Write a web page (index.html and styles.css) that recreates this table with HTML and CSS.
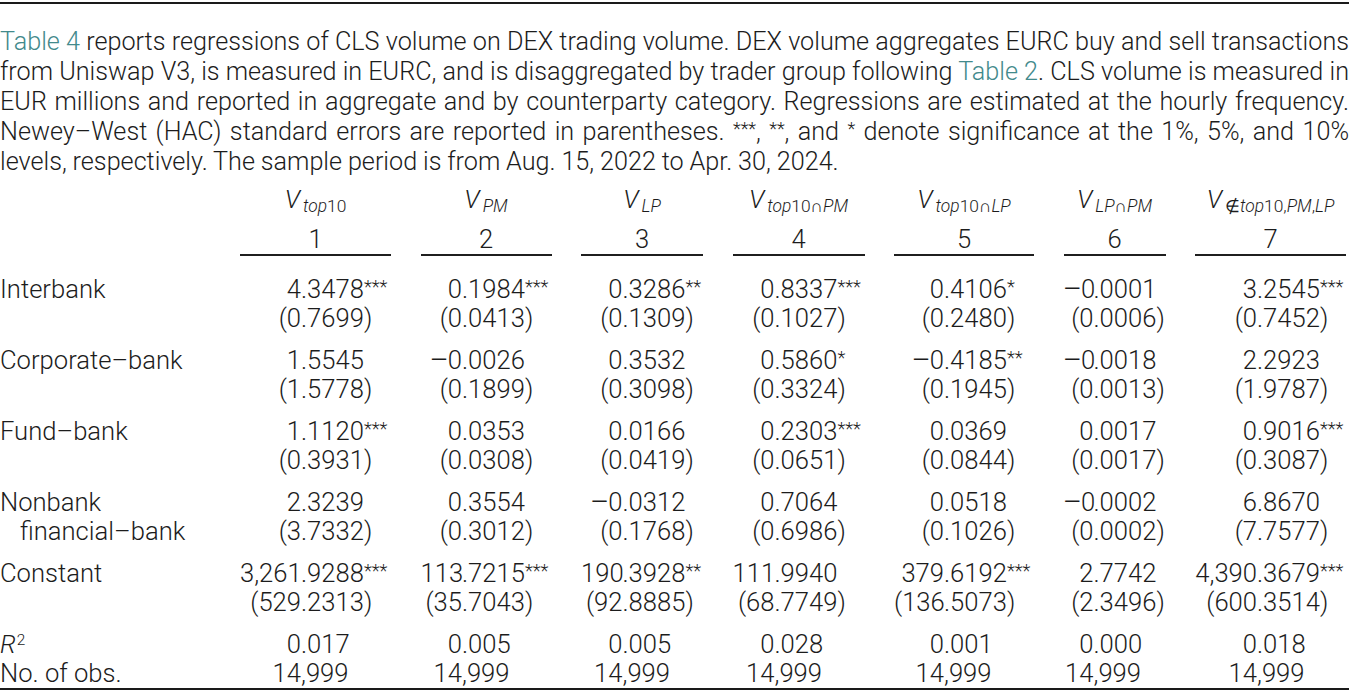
FILE: index.html
```html
<!DOCTYPE html>
<html lang="en">
<head>
<meta charset="utf-8">
<title>Table 4</title>
<link rel="stylesheet" href="styles.css">
</head>
<body>
<div class="top-rule"></div>
<p class="intro">
  <span class="ln"><span class="xref">Table 4</span> reports regressions of CLS volume on DEX trading volume. DEX volume aggregates EURC buy and sell transactions</span>
  <span class="ln">from Uniswap V3, is measured in EURC, and is disaggregated by trader group following <span class="xref">Table 2</span>. CLS volume is measured in</span>
  <span class="ln">EUR millions and reported in aggregate and by counterparty category. Regressions are estimated at the hourly frequency.</span>
  <span class="ln">Newey–West (HAC) standard errors are reported in parentheses. <span class="ast">***</span>, <span class="ast">**</span>, and <span class="ast">*</span> denote significance at the 1%, 5%, and 10%</span>
  <span class="ln last">levels, respectively. The sample period is from Aug. 15, 2022 to Apr. 30, 2024.</span>
</p>

<div class="reg">
  <div class="row">
    <div class="lab"></div>
    <div class="h"><i>V</i><span class="sub"><i>top</i>10</span></div>
    <div class="h"><i>V</i><span class="sub"><i>PM</i></span></div>
    <div class="h"><i>V</i><span class="sub"><i>LP</i></span></div>
    <div class="h"><i>V</i><span class="sub"><i>top</i>10∩<i>PM</i></span></div>
    <div class="h"><i>V</i><span class="sub"><i>top</i>10∩<i>LP</i></span></div>
    <div class="h"><i>V</i><span class="sub"><i>LP</i>∩<i>PM</i></span></div>
    <div class="h"><i>V</i><span class="sub">∉<i>top</i>10,<i>PM</i>,<i>LP</i></span></div>
  </div>
  <div class="row">
    <div class="lab"></div>
    <div class="n"><div class="nr">1</div></div>
    <div class="n"><div class="nr">2</div></div>
    <div class="n"><div class="nr">3</div></div>
    <div class="n"><div class="nr">4</div></div>
    <div class="n"><div class="nr">5</div></div>
    <div class="n"><div class="nr">6</div></div>
    <div class="n"><div class="nr">7</div></div>
  </div>

  <div class="row first">
    <div class="lab">Interbank</div>
    <div class="i">4</div><div class="f">.3478<sup class="st">***</sup></div>
    <div class="i">0</div><div class="f">.1984<sup class="st">***</sup></div>
    <div class="i">0</div><div class="f">.3286<sup class="st">**</sup></div>
    <div class="i">0</div><div class="f">.8337<sup class="st">***</sup></div>
    <div class="i">0</div><div class="f">.4106<sup class="st">*</sup></div>
    <div class="i"><span class="mi">−</span>0</div><div class="f">.0001</div>
    <div class="i">3</div><div class="f">.2545<sup class="st">***</sup></div>
  </div>
  <div class="row">
    <div class="lab"></div>
    <div class="i">(0</div><div class="f">.7699)</div>
    <div class="i">(0</div><div class="f">.0413)</div>
    <div class="i">(0</div><div class="f">.1309)</div>
    <div class="i">(0</div><div class="f">.1027)</div>
    <div class="i">(0</div><div class="f">.2480)</div>
    <div class="i">(0</div><div class="f">.0006)</div>
    <div class="i">(0</div><div class="f">.7452)</div>
  </div>

  <div class="row g">
    <div class="lab">Corporate–bank</div>
    <div class="i">1</div><div class="f">.5545</div>
    <div class="i"><span class="mi">−</span>0</div><div class="f">.0026</div>
    <div class="i">0</div><div class="f">.3532</div>
    <div class="i">0</div><div class="f">.5860<sup class="st">*</sup></div>
    <div class="i"><span class="mi">−</span>0</div><div class="f">.4185<sup class="st">**</sup></div>
    <div class="i"><span class="mi">−</span>0</div><div class="f">.0018</div>
    <div class="i">2</div><div class="f">.2923</div>
  </div>
  <div class="row">
    <div class="lab"></div>
    <div class="i">(1</div><div class="f">.5778)</div>
    <div class="i">(0</div><div class="f">.1899)</div>
    <div class="i">(0</div><div class="f">.3098)</div>
    <div class="i">(0</div><div class="f">.3324)</div>
    <div class="i">(0</div><div class="f">.1945)</div>
    <div class="i">(0</div><div class="f">.0013)</div>
    <div class="i">(1</div><div class="f">.9787)</div>
  </div>

  <div class="row g">
    <div class="lab">Fund–bank</div>
    <div class="i">1</div><div class="f">.1120<sup class="st">***</sup></div>
    <div class="i">0</div><div class="f">.0353</div>
    <div class="i">0</div><div class="f">.0166</div>
    <div class="i">0</div><div class="f">.2303<sup class="st">***</sup></div>
    <div class="i">0</div><div class="f">.0369</div>
    <div class="i">0</div><div class="f">.0017</div>
    <div class="i">0</div><div class="f">.9016<sup class="st">***</sup></div>
  </div>
  <div class="row">
    <div class="lab"></div>
    <div class="i">(0</div><div class="f">.3931)</div>
    <div class="i">(0</div><div class="f">.0308)</div>
    <div class="i">(0</div><div class="f">.0419)</div>
    <div class="i">(0</div><div class="f">.0651)</div>
    <div class="i">(0</div><div class="f">.0844)</div>
    <div class="i">(0</div><div class="f">.0017)</div>
    <div class="i">(0</div><div class="f">.3087)</div>
  </div>

  <div class="row g">
    <div class="lab">Nonbank</div>
    <div class="i">2</div><div class="f">.3239</div>
    <div class="i">0</div><div class="f">.3554</div>
    <div class="i"><span class="mi">−</span>0</div><div class="f">.0312</div>
    <div class="i">0</div><div class="f">.7064</div>
    <div class="i">0</div><div class="f">.0518</div>
    <div class="i"><span class="mi">−</span>0</div><div class="f">.0002</div>
    <div class="i">6</div><div class="f">.8670</div>
  </div>
  <div class="row">
    <div class="lab indent">financial–bank</div>
    <div class="i">(3</div><div class="f">.7332)</div>
    <div class="i">(0</div><div class="f">.3012)</div>
    <div class="i">(0</div><div class="f">.1768)</div>
    <div class="i">(0</div><div class="f">.6986)</div>
    <div class="i">(0</div><div class="f">.1026)</div>
    <div class="i">(0</div><div class="f">.0002)</div>
    <div class="i">(7</div><div class="f">.7577)</div>
  </div>

  <div class="row g">
    <div class="lab">Constant</div>
    <div class="i">3,261</div><div class="f">.9288<sup class="st">***</sup></div>
    <div class="i">113</div><div class="f">.7215<sup class="st">***</sup></div>
    <div class="i">190</div><div class="f">.3928<sup class="st">**</sup></div>
    <div class="i">111</div><div class="f">.9940</div>
    <div class="i">379</div><div class="f">.6192<sup class="st">***</sup></div>
    <div class="i">2</div><div class="f">.7742</div>
    <div class="i">4,390</div><div class="f">.3679<sup class="st">***</sup></div>
  </div>
  <div class="row">
    <div class="lab"></div>
    <div class="i">(529</div><div class="f">.2313)</div>
    <div class="i">(35</div><div class="f">.7043)</div>
    <div class="i">(92</div><div class="f">.8885)</div>
    <div class="i">(68</div><div class="f">.7749)</div>
    <div class="i">(136</div><div class="f">.5073)</div>
    <div class="i">(2</div><div class="f">.3496)</div>
    <div class="i">(600</div><div class="f">.3514)</div>
  </div>

  <div class="row g">
    <div class="lab"><i>R</i><sup class="sq">2</sup></div>
    <div class="i">0</div><div class="f">.017</div>
    <div class="i">0</div><div class="f">.005</div>
    <div class="i">0</div><div class="f">.005</div>
    <div class="i">0</div><div class="f">.028</div>
    <div class="i">0</div><div class="f">.001</div>
    <div class="i">0</div><div class="f">.000</div>
    <div class="i">0</div><div class="f">.018</div>
  </div>
  <div class="row">
    <div class="lab">No. of obs.</div>
    <div class="i">14</div><div class="f">,999</div>
    <div class="i">14</div><div class="f">,999</div>
    <div class="i">14</div><div class="f">,999</div>
    <div class="i">14</div><div class="f">,999</div>
    <div class="i">14</div><div class="f">,999</div>
    <div class="i">14</div><div class="f">,999</div>
    <div class="i">14</div><div class="f">,999</div>
  </div>
</div>
<div class="bottom-rule"></div>
</body>
</html>
```
FILE: styles.css
```css
html, body {
  margin: 0;
  padding: 0;
  background: #ffffff;
}

body {
  font-family: Roboto, "DejaVu Sans", sans-serif;
  font-weight: 300;
  color: #1c1c1c;
  width: 1349px;
}

.top-rule {
  height: 2px;
  margin-top: 2px;
  background: #1a1a1a;
}

.bottom-rule {
  height: 2px;
  background: #1a1a1a;
}

.intro {
  margin: 22.6px 0 0;
  font-size: 25.2px;
  line-height: 30px;
  word-spacing: -0.3px;
}

.intro .ln {
  display: block;
  text-align: justify;
  text-align-last: justify;
}

.intro .ln.last {
  text-align: left;
  text-align-last: left;
}

.xref {
  color: #428a8c;
}

.ast {
  font-size: 0.72em;
  line-height: 0;
  vertical-align: 5px;
}

/* regression table */
.reg {
  display: grid;
  grid-template-columns:
    225.25px
    75.75px 104.75px
    56.25px 104.25px
    56.25px 95.25px
    56.75px 104.75px
    64.75px 104.75px
    44.75px 86.75px
    76.75px 92px;
  margin-top: 8.8px;
  font-size: 25.6px;
  line-height: 29px;
}

.row {
  display: contents;
}

.row > div {
  white-space: nowrap;
}

.lab {
  text-align: left;
}

.lab.indent {
  padding-left: 20px;
}

.h {
  grid-column: span 2;
  text-align: center;
  padding: 0 14.75px;
}

.h:last-child {
  padding-right: 3px;
}

.sub {
  font-size: 0.68em;
  line-height: 0;
  vertical-align: -0.22em;
  margin-left: 3px;
}

.n {
  grid-column: span 2;
  padding: 11px 14.75px 0;
}

.n:last-child {
  padding-right: 3px;
}

.nr {
  text-align: center;
  border-bottom: 2px solid #1f1f1f;
}

.i {
  text-align: right;
  padding-left: 14.75px;
}

.f {
  text-align: left;
  padding-right: 14.75px;
}

.f:last-child {
  padding-right: 3px;
}

.mi {
  font-family: "Noto Sans", Roboto, sans-serif;
  font-weight: 300;
  font-size: 1.2em;
  line-height: 0;
  vertical-align: -1px;
}

.row.first > div {
  padding-top: 19px;
}

.row.g > div {
  padding-top: 13px;
}

.st {
  font-size: 0.72em;
  line-height: 0;
  vertical-align: 5px;
}

.sq {
  font-size: 0.6em;
  line-height: 0;
  vertical-align: 8px;
  margin-left: 1px;
}
```
